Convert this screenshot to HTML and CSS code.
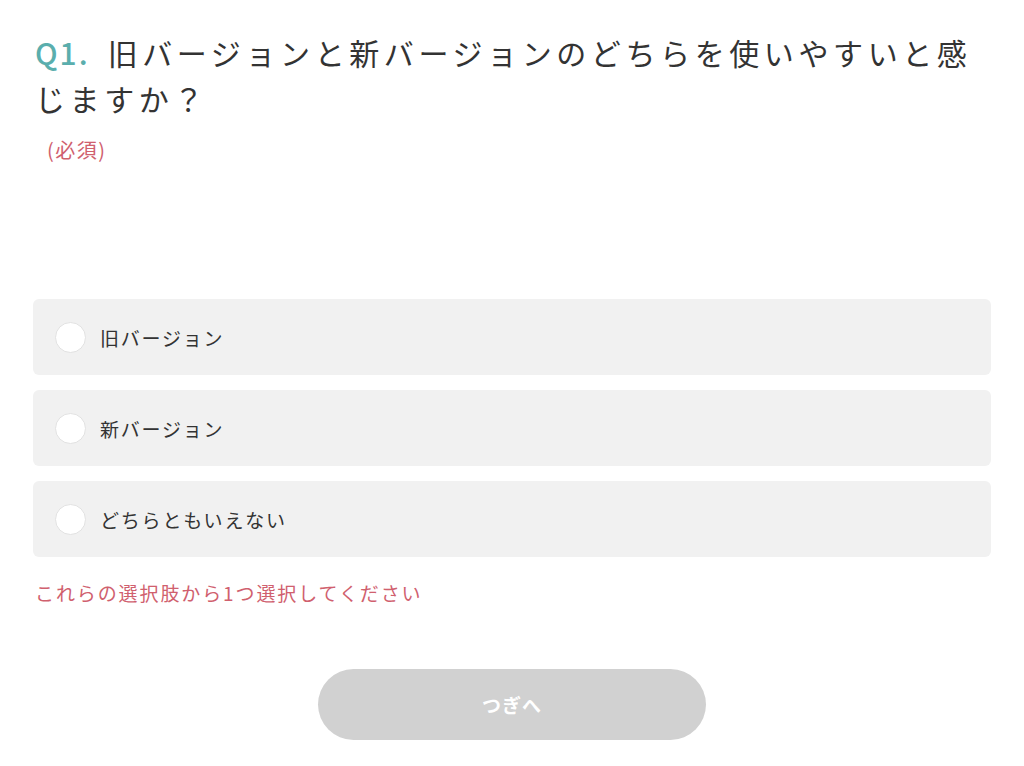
FILE: index.html
```html
<!DOCTYPE html>
<html lang="ja">
<head>
<meta charset="utf-8">
<link rel="stylesheet" href="styles.css">
</head>
<body>
<main class="page">
  <h1 class="question"><span class="qnum">Q1.</span>旧バージョンと新バージョンのどちらを使いやすいと感じますか？</h1>
  <p class="required">(必須)</p>
  <div class="options">
    <label class="option"><span class="radio"></span><span class="label">旧バージョン</span></label>
    <label class="option"><span class="radio"></span><span class="label">新バージョン</span></label>
    <label class="option"><span class="radio"></span><span class="label">どちらともいえない</span></label>
  </div>
  <p class="error">これらの選択肢から1つ選択してください</p>
  <div class="actions">
    <button class="next" type="button">つぎへ</button>
  </div>
</main>
</body>
</html>
```
FILE: styles.css
```css
html, body {
  margin: 0;
  padding: 0;
  background: #ffffff;
}
body {
  font-family: "Noto Sans CJK JP", "Noto Sans", sans-serif;
  color: #333333;
}
.page {
  padding: 29px 33px 0 33px;
}
.question {
  margin: 0;
  padding-left: 2px;
  font-size: 30px;
  font-weight: 400;
  line-height: 46px;
  letter-spacing: 4.6px;
  color: #333333;
}
.qnum {
  padding-right: 18px;
  color: #5aaead;
  font-weight: 500;
  letter-spacing: 2px;
}
.required {
  margin: 15px 0 0 0;
  padding-left: 14px;
  font-size: 20px;
  line-height: 28px;
  color: #d0606e;
  letter-spacing: 1.5px;
}
.options {
  margin-top: 135px;
  display: flex;
  flex-direction: column;
  gap: 15px;
}
.option {
  display: flex;
  align-items: center;
  height: 76px;
  background: #f1f1f1;
  border-radius: 6px;
  padding-left: 22px;
  box-sizing: border-box;
}
.radio {
  width: 31px;
  height: 31px;
  border-radius: 50%;
  background: #ffffff;
  border: 1px solid #e2e2e2;
  box-sizing: border-box;
  flex: none;
}
.label {
  margin-left: 14px;
  font-size: 19px;
  letter-spacing: 1.8px;
  color: #333333;
}
.error {
  margin: 24px 0 0 2px;
  font-size: 19px;
  line-height: 24px;
  letter-spacing: 1.9px;
  color: #d0606e;
}
.actions {
  display: flex;
  justify-content: center;
  margin-top: 64px;
}
.next {
  width: 388px;
  height: 71px;
  border: none;
  border-radius: 36px;
  background: #d1d1d1;
  color: #ffffff;
  font-family: "Noto Sans CJK JP", "Noto Sans", sans-serif;
  font-size: 19px;
  font-weight: 700;
  letter-spacing: 1px;
}
```
